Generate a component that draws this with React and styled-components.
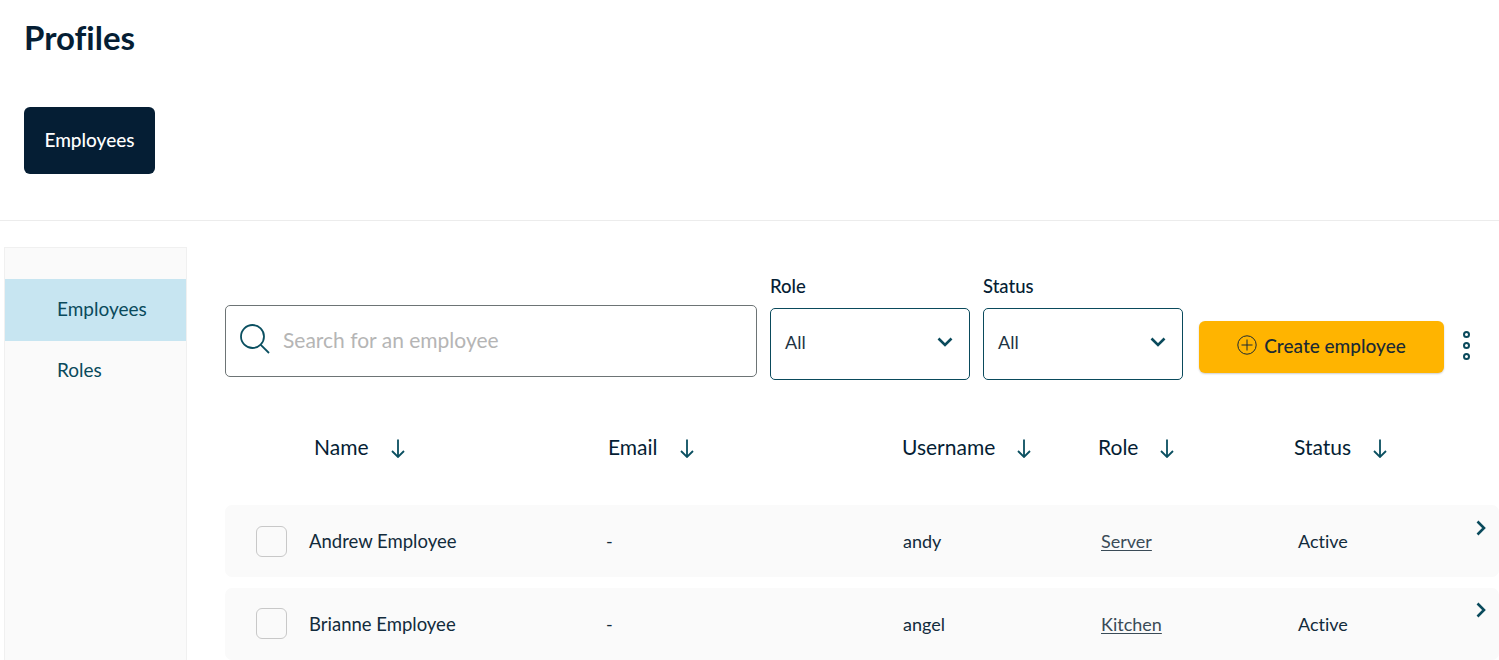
import React from 'react';
import styled, { createGlobalStyle } from 'styled-components';

const GlobalStyle = createGlobalStyle`
  html, body {
    margin: 0;
    padding: 0;
    background: #fff;
    overflow: hidden;
  }
  body {
    font-family: 'Lato', 'Open Sans', sans-serif;
    font-variant-ligatures: none;
    color: #051e34;
  }
  * {
    box-sizing: border-box;
  }
`;

const Page = styled.div`
  width: 1499px;
  height: 660px;
  overflow: hidden;
`;

const Header = styled.header`
  height: 221px;
  padding: 18px 24px 0;
  border-bottom: 1px solid #ececec;
`;

const Title = styled.h1`
  margin: 0 0 51px;
  font-size: 33px;
  line-height: 38px;
  font-weight: 700;
  color: #051e34;
`;

const TabButton = styled.button`
  display: block;
  width: 131px;
  height: 67px;
  padding: 0 0 3px;
  border: 0;
  border-radius: 6px;
  background: #051e34;
  color: #fff;
  font-family: inherit;
  font-size: 19px;
  font-weight: 500;
`;

const Body = styled.div`
  display: flex;
  padding: 26px 0 0 4px;
`;

const Sidebar = styled.nav`
  flex: none;
  width: 183px;
  height: 420px;
  padding-top: 31px;
  background: #fafafa;
  border: 1px solid #f0f0f0;
`;

const SideItem = styled.div`
  height: ${(p) => (p.$active ? 62 : 60)}px;
  padding: 0 0 3px 52px;
  display: flex;
  align-items: center;
  font-size: 19px;
  color: #0a4a5c;
  background: ${(p) => (p.$active ? '#c7e5f1' : 'transparent')};
`;

const Content = styled.main`
  flex: none;
  width: 1274px;
  margin-left: 38px;
  padding-top: 30px;
`;

const Toolbar = styled.div`
  display: flex;
  align-items: flex-start;
  height: 103px;
`;

const SearchBox = styled.div`
  width: 532px;
  height: 72px;
  margin-top: 28px;
  padding: 0 0 4px 13px;
  display: flex;
  align-items: center;
  gap: 12px;
  border: 1px solid #6d7475;
  border-radius: 5px;
  font-size: 21px;
  color: #b5b5b5;
`;

const Field = styled.div`
  width: 200px;
  margin-left: ${(p) => p.$gap}px;
`;

const FieldLabel = styled.div`
  height: 31px;
  font-size: 18.5px;
  line-height: 19px;
  font-weight: 500;
  color: #051e34;
`;

const Select = styled.div`
  height: 72px;
  padding: 0 16px 4px 14px;
  display: flex;
  align-items: center;
  justify-content: space-between;
  border: 1px solid #0a4a5c;
  border-radius: 5px;
  font-size: 18px;
  color: #1d3343;
`;

const CreateButton = styled.button`
  width: 245px;
  height: 52px;
  margin: 44px 0 0 16px;
  padding: 0 0 4px;
  display: flex;
  align-items: center;
  justify-content: center;
  gap: 7px;
  border: 0;
  border-radius: 6px;
  background: #ffb400;
  box-shadow: 0 1px 2px rgba(0, 0, 0, 0.2);
  color: #1b2a33;
  font-family: inherit;
  font-size: 19px;
  font-weight: 500;
`;

const MoreDots = styled.div`
  margin: 54px 0 0 19px;
  display: flex;
  flex-direction: column;
  gap: 4px;
`;

const Dot = styled.span`
  width: 7px;
  height: 7px;
  border: 2px solid #0a4a5c;
  border-radius: 50%;
`;

const TableHead = styled.div`
  display: grid;
  grid-template-columns: 294px 294px 196px 196px 1fr;
  align-items: center;
  height: 30px;
  margin: 51px 0 44px;
  padding-left: 89px;
`;

const HeadCell = styled.div`
  display: flex;
  align-items: center;
  gap: 22px;
  font-size: 21px;
  font-weight: 400;
  color: #051e34;

  svg {
    margin-top: 5px;
  }
`;

const Row = styled.div`
  display: grid;
  grid-template-columns: 84px 297px 297px 198px 197px 1fr;
  align-items: center;
  height: 72px;
  margin-bottom: 10.75px;
  border-radius: 7px;
  background: #fafafa;
  font-size: 18px;
  color: #122b3c;
`;

const NameCell = styled.div`
  font-size: 18.5px;
`;

const Checkbox = styled.span`
  width: 31px;
  height: 31px;
  margin-left: 31px;
  border: 1px solid #c8c8c8;
  border-radius: 6px;
  background: #fafafa;
`;

const RoleLink = styled.a`
  color: #3a4b57;
  text-decoration: underline;
  text-underline-offset: 2px;
`;

const StatusCell = styled.div`
  display: flex;
  align-items: center;
  justify-content: space-between;
  padding-right: 13px;
`;

const ChevronWrap = styled.span`
  display: flex;
  margin-top: -27px;
  color: #0a4a5c;
`;

const SearchIcon = () => (
  <svg width="32" height="32" viewBox="0 0 32 32" fill="none" stroke="#0a4f60" strokeWidth="1.8">
    <circle cx="13.5" cy="13.5" r="11.5" />
    <path d="M21.8 21.8 L30 30" />
  </svg>
);

const ChevronDown = () => (
  <svg width="16" height="10" viewBox="0 0 16 10" fill="none" stroke="#0a4a5c" strokeWidth="2.6">
    <path d="M1.5 1.5 L8 8 L14.5 1.5" />
  </svg>
);

const ChevronRight = () => (
  <svg width="10" height="16" viewBox="0 0 10 16" fill="none" stroke="currentColor" strokeWidth="2.6">
    <path d="M1.5 1.5 L8 8 L1.5 14.5" />
  </svg>
);

const ArrowDown = () => (
  <svg width="14" height="19" viewBox="0 0 14 19" fill="none" stroke="#0a4f60" strokeWidth="1.8">
    <path d="M7 0.5 V17.5 M1 12 L7 18 L13 12" />
  </svg>
);

const PlusCircle = () => (
  <svg width="20" height="20" viewBox="0 0 20 20" fill="none" stroke="#1b2a33" strokeWidth="1">
    <circle cx="10" cy="10" r="9.2" />
    <path d="M10 4.5 V15.5 M4.5 10 H15.5" />
  </svg>
);

const columns = ['Name', 'Email', 'Username', 'Role', 'Status'];

const employees = [
  { name: 'Andrew Employee', email: '-', username: 'andy', role: 'Server', status: 'Active' },
  { name: 'Brianne Employee', email: '-', username: 'angel', role: 'Kitchen', status: 'Active' },
];

const App = () => (
  <Page>
    <GlobalStyle />
    <Header>
      <Title>Profiles</Title>
      <TabButton>Employees</TabButton>
    </Header>
    <Body>
      <Sidebar>
        <SideItem $active>Employees</SideItem>
        <SideItem>Roles</SideItem>
      </Sidebar>
      <Content>
        <Toolbar>
          <SearchBox>
            <SearchIcon />
            Search for an employee
          </SearchBox>
          <Field $gap={13}>
            <FieldLabel>Role</FieldLabel>
            <Select>
              All
              <ChevronDown />
            </Select>
          </Field>
          <Field $gap={13}>
            <FieldLabel>Status</FieldLabel>
            <Select>
              All
              <ChevronDown />
            </Select>
          </Field>
          <CreateButton>
            <PlusCircle />
            Create employee
          </CreateButton>
          <MoreDots>
            <Dot />
            <Dot />
            <Dot />
          </MoreDots>
        </Toolbar>
        <TableHead>
          {columns.map((col) => (
            <HeadCell key={col}>
              {col}
              <ArrowDown />
            </HeadCell>
          ))}
        </TableHead>
        {employees.map((emp) => (
          <Row key={emp.name}>
            <Checkbox />
            <NameCell>{emp.name}</NameCell>
            <div>{emp.email}</div>
            <div>{emp.username}</div>
            <div>
              <RoleLink>{emp.role}</RoleLink>
            </div>
            <StatusCell>
              {emp.status}
              <ChevronWrap>
                <ChevronRight />
              </ChevronWrap>
            </StatusCell>
          </Row>
        ))}
      </Content>
    </Body>
  </Page>
);

export default App;
